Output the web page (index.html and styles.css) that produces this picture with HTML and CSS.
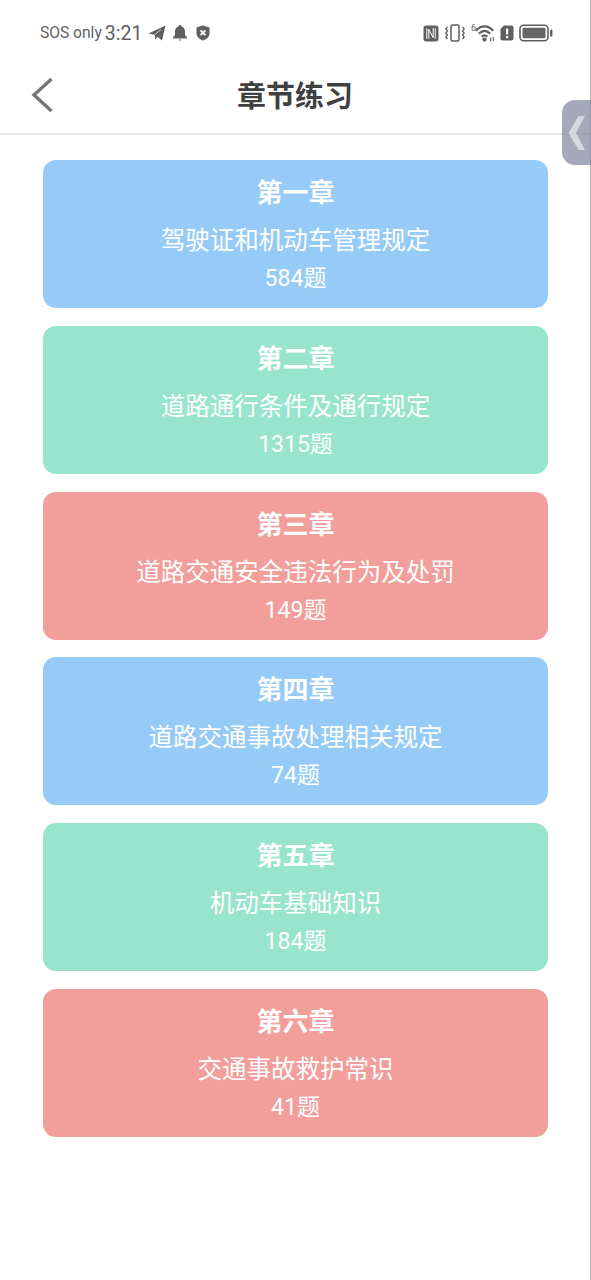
FILE: index.html
```html
<!DOCTYPE html>
<html lang="zh-CN">
<head>
  <meta charset="UTF-8">
  <meta name="viewport" content="width=device-width, initial-scale=1.0">
  <title>章节练习</title>
  <link rel="stylesheet" href="styles.css">
</head>
<body>

  <div class="page">
    <div class="status-bar">
      <div class="status-left">
        <span class="sos">SOS only</span>
        <span class="clock">3:21</span>
        <svg class="telegram" width="18" height="16" viewBox="0 0 18 16"><path d="M17.5 0.5 L14 15.5 L9.6 11.8 L7.4 14.6 L6.6 9.8 L0.5 8.4 Z" fill="#5f5f5f"/><path d="M6.6 9.8 L13 4.4" stroke="#fff" stroke-width="0.7"/></svg>
        <svg class="bell" width="16" height="18" viewBox="0 0 16 18"><path d="M8 1 C9 1 9.5 1.6 9.6 2.4 C12 3.1 13 5 13 7.5 V11 L15 13.6 V14.4 H1 V13.6 L3 11 V7.5 C3 5 4 3.1 6.4 2.4 C6.5 1.6 7 1 8 1 Z M6.6 15.4 H9.4 L8 17 Z" fill="#5f5f5f"/></svg>
        <svg class="shield" width="14" height="16" viewBox="0 0 14 16"><path d="M7 0.5 L13.5 2.6 V8 C13.5 11.6 10.8 14.4 7 15.5 C3.2 14.4 0.5 11.6 0.5 8 V2.6 Z" fill="#5f5f5f"/><path d="M4.6 5.4 L9.4 10.2 M9.4 5.4 L4.6 10.2" stroke="#fff" stroke-width="1.8"/></svg>
      </div>
      <div class="status-right">
        <svg width="16" height="17" viewBox="0 0 16 17"><rect x="0.5" y="0.5" width="15" height="16" rx="3" fill="#5f5f5f"/><path d="M3.8 3.2 V13.8 M12.2 3.2 V13.8 M5.8 13.8 V4.2 L10.2 12.8 V3.2" fill="none" stroke="#fff" stroke-width="1"/></svg>
        <svg width="22" height="18" viewBox="0 0 22 18"><rect x="7" y="1" width="8" height="16" rx="1.5" fill="none" stroke="#5f5f5f" stroke-width="1.5"/><path d="M3.5 3 L1.8 5 L3.5 7 L1.8 9 L3.5 11 L1.8 13 L3.5 15 M18.5 3 L20.2 5 L18.5 7 L20.2 9 L18.5 11 L20.2 13 L18.5 15" fill="none" stroke="#5f5f5f" stroke-width="1.3"/></svg>
        <div class="wifi">
          <span class="wifi-six">6</span>
          <svg width="20" height="18" viewBox="0 0 20 18"><path d="M0.8 6.8 C6 1 13 1 18.2 6.8 M3.8 9.8 C7.5 6 11.5 6 15.2 9.8 M6.6 12.6 C8.5 11 10.5 11 12.4 12.6" fill="none" stroke="#5f5f5f" stroke-width="2.2"/><circle cx="9.5" cy="15.6" r="2.1" fill="#5f5f5f"/><path d="M15.7 17.5 V13.5 M18.3 13 V17" stroke="#5f5f5f" stroke-width="1.1"/></svg>
        </div>
        <svg width="14" height="16" viewBox="0 0 14 16"><path d="M4 0.5 H11.5 C12.6 0.5 13.5 1.4 13.5 2.5 V13.5 C13.5 14.6 12.6 15.5 11.5 15.5 H2.5 C1.4 15.5 0.5 14.6 0.5 13.5 V4 Z" fill="#5f5f5f"/><rect x="6" y="3.5" width="2.2" height="6" fill="#fff"/><rect x="6" y="11" width="2.2" height="2.2" fill="#fff"/></svg>
        <svg width="34" height="18" viewBox="0 0 34 18"><rect x="1" y="1.2" width="28" height="15.6" rx="3.5" fill="none" stroke="#5f5f5f" stroke-width="1.6"/><rect x="3.5" y="3.8" width="23" height="10.4" rx="1.5" fill="#666"/><rect x="31" y="5.5" width="2.4" height="7" rx="1" fill="#5f5f5f"/></svg>
      </div>
    </div>

    <div class="title-bar">
      <svg class="back" width="24" height="36" viewBox="0 0 24 36"><path d="M21.5 2 L4 18 L21.5 34" fill="none" stroke="#757575" stroke-width="3.4"/></svg>
      <h1>章节练习</h1>
    </div>

    <div class="chapters">
      <div class="card blue">
        <div class="card-title">第一章</div>
        <div class="card-name">驾驶证和机动车管理规定</div>
        <div class="card-count">584题</div>
      </div>
      <div class="card green">
        <div class="card-title">第二章</div>
        <div class="card-name">道路通行条件及通行规定</div>
        <div class="card-count">1315题</div>
      </div>
      <div class="card red">
        <div class="card-title">第三章</div>
        <div class="card-name">道路交通安全违法行为及处罚</div>
        <div class="card-count">149题</div>
      </div>
      <div class="card blue">
        <div class="card-title">第四章</div>
        <div class="card-name">道路交通事故处理相关规定</div>
        <div class="card-count">74题</div>
      </div>
      <div class="card green">
        <div class="card-title">第五章</div>
        <div class="card-name">机动车基础知识</div>
        <div class="card-count">184题</div>
      </div>
      <div class="card red">
        <div class="card-title">第六章</div>
        <div class="card-name">交通事故救护常识</div>
        <div class="card-count">41题</div>
      </div>
    </div>
  </div>

  <div class="side-tab">
    <svg width="18" height="34" viewBox="0 0 18 34"><path d="M17 0 H10.5 L0.5 17 L10.5 34 H17 L8 17 Z" fill="#d6d8df"/></svg>
  </div>

</body>
</html>
```

FILE: styles.css
```css
body {
  margin: 0;
  background-color: #fff;
  font-family: Roboto, "Noto Sans CJK SC", sans-serif;
  color: #333;
}

.page {
  height: 1280px;
  overflow: hidden;
  border-right: 1px solid #b9b9b9;
  box-sizing: border-box;
}

.status-bar {
  height: 66px;
  display: flex;
  justify-content: space-between;
  align-items: center;
  padding: 0 37px 0 40px;
  color: #5f5f5f;
}

.status-left,
.status-right {
  display: flex;
  align-items: center;
}

.status-right {
  gap: 5px;
}

.sos {
  font-size: 15.6px;
}

.clock {
  margin-left: 3px;
  font-size: 19.5px;
}

.telegram {
  margin-left: 6px;
}

.bell {
  margin-left: 6px;
}

.shield {
  margin-left: 8px;
}

.wifi {
  display: flex;
  align-items: flex-start;
}

.wifi-six {
  width: 4px;
  font-size: 9px;
  line-height: 9px;
}

.title-bar {
  height: 69px;
  box-sizing: border-box;
  padding-bottom: 12px;
  display: flex;
  align-items: center;
  justify-content: center;
  position: relative;
  border-bottom: 2px solid #e6e6e6;
}

.title-bar h1 {
  margin: 0;
  font-size: 29px;
  font-weight: 700;
  color: #404040;
}

.back {
  position: absolute;
  left: 30px;
  top: 11px;
}

.chapters {
  display: flex;
  flex-direction: column;
  gap: 17.8px;
  padding: 25px 42px 0 43px;
}

.card {
  height: 148px;
  border-radius: 13px;
  color: #fff;
  text-align: center;
  display: flex;
  flex-direction: column;
  align-items: center;
}

.blue {
  background-color: #97cbf7;
}

.green {
  background-color: #99e4cd;
}

.red {
  background-color: #f29e9b;
}

.card-title {
  margin-top: 15px;
  font-size: 26px;
  line-height: 36px;
  font-weight: 700;
}

.card-name {
  margin-top: 12px;
  font-size: 24.5px;
  line-height: 36px;
}

.card-count {
  margin-top: 2px;
  font-size: 23px;
  line-height: 36px;
}

.side-tab {
  position: absolute;
  left: 562px;
  top: 100px;
  width: 29px;
  height: 65px;
  background-color: rgba(130, 136, 158, 0.72);
  border-radius: 13px 0 0 13px;
  display: flex;
  align-items: center;
  justify-content: center;
}
```
